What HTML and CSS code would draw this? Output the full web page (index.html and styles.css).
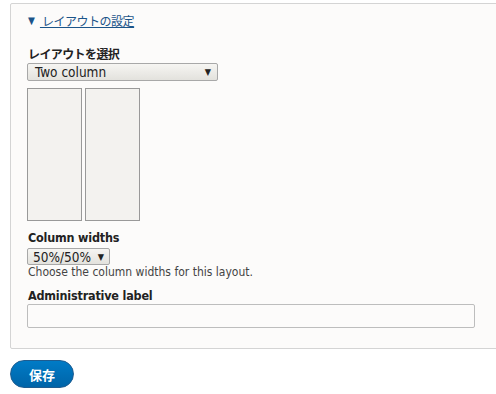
FILE: index.html
```html
<!DOCTYPE html>
<html lang="ja">
<head>
  <meta charset="UTF-8" />
  <title>レイアウトの設定</title>
  <link rel="stylesheet" href="styles.css">
</head>
<body>

  <div class="fieldset">
    <div class="summary">
      <span class="arrow">&#9660;</span>
      <a href="#" class="summary-link">&nbsp;レイアウトの設定</a>
    </div>

    <div class="form-item item-layout">
      <label class="label label-ja">レイアウトを選択</label>
      <div class="select select-wide">
        <span>Two column</span>
        <span class="caret">&#9660;</span>
      </div>
      <div class="preview">
        <div class="preview-col"></div>
        <div class="preview-col"></div>
      </div>
    </div>

    <div class="form-item">
      <label class="label">Column widths</label>
      <div class="select select-small">
        <span>50%/50%</span>
        <span class="caret">&#9660;</span>
      </div>
      <div class="description">Choose the column widths for this layout.</div>
    </div>

    <div class="form-item">
      <label class="label">Administrative label</label>
      <input type="text" class="text-input" />
    </div>
  </div>

  <button class="button">保存</button>

</body>
</html>
```

FILE: styles.css
```css
body {
  margin: 0;
  overflow: hidden;
  background-color: #fff;
  font-family: "DejaVu Sans Condensed", "DejaVu Sans", "Noto Sans CJK JP", sans-serif;
  font-size: 12px;
  color: #222;
}
.fieldset {
  margin: 3px -30px 0 10px;
  padding: 8px 16px 20px 16px;
  background-color: #fcfbfa;
  border: 1px solid #d4d4d4;
  border-radius: 2px;
}
.summary {
  display: flex;
  align-items: center;
  height: 16px;
  padding-left: 1px;
}
.arrow {
  font-size: 10px;
  color: #1b5489;
  margin-right: 5px;
}
.summary-link {
  color: #1b5489;
  font-family: "Noto Sans CJK JP", sans-serif;
  font-size: 12px;
  letter-spacing: -0.5px;
  text-decoration: underline;
}
.form-item { margin-top: 9px; }
.item-layout { margin-top: 18px; }
.label {
  display: block;
  font-weight: bold;
  font-size: 12.5px;
  line-height: 16px;
  margin-left: 1px;
  letter-spacing: -0.2px;
}
.label-ja {
  font-family: "Noto Sans CJK JP", sans-serif;
  font-size: 12px;
  letter-spacing: -0.6px;
}
.select {
  display: flex;
  align-items: center;
  justify-content: space-between;
  box-sizing: border-box;
  height: 18px;
  margin-top: 1px;
  padding: 0 6px 0 7px;
  border: 1px solid #a8a8a8;
  border-radius: 2px;
  background: linear-gradient(#f6f5f2, #e3e2dd);
  font-size: 13.5px;
  color: #222;
}
.select-wide { width: 191px; }
.select-small {
  width: 83px;
  height: 17px;
  margin-top: 2px;
  padding: 0 5px 0 5px;
}
.caret { font-size: 9px; }
.preview {
  display: flex;
  gap: 3px;
  margin-top: 7px;
}
.preview-col {
  width: 53px;
  height: 131px;
  border: 1px solid #999;
  background-color: #f3f2ef;
}
.description {
  color: #444;
  font-size: 12px;
  line-height: 14px;
  margin-left: 1px;
}
.text-input {
  display: block;
  box-sizing: border-box;
  width: 448px;
  height: 24px;
  margin: 0;
  border: 1px solid #bdbdbd;
  border-radius: 2px;
  background-color: #fcfbfa;
}
.button {
  display: block;
  margin: 11px 0 0 10px;
  width: 64px;
  height: 28px;
  border: 1px solid #1e5c90;
  border-radius: 20px;
  background: linear-gradient(#007bc6, #0064a8);
  color: white;
  font-family: "Noto Sans CJK JP", sans-serif;
  font-weight: bold;
  font-size: 13px;
  cursor: pointer;
}
```
